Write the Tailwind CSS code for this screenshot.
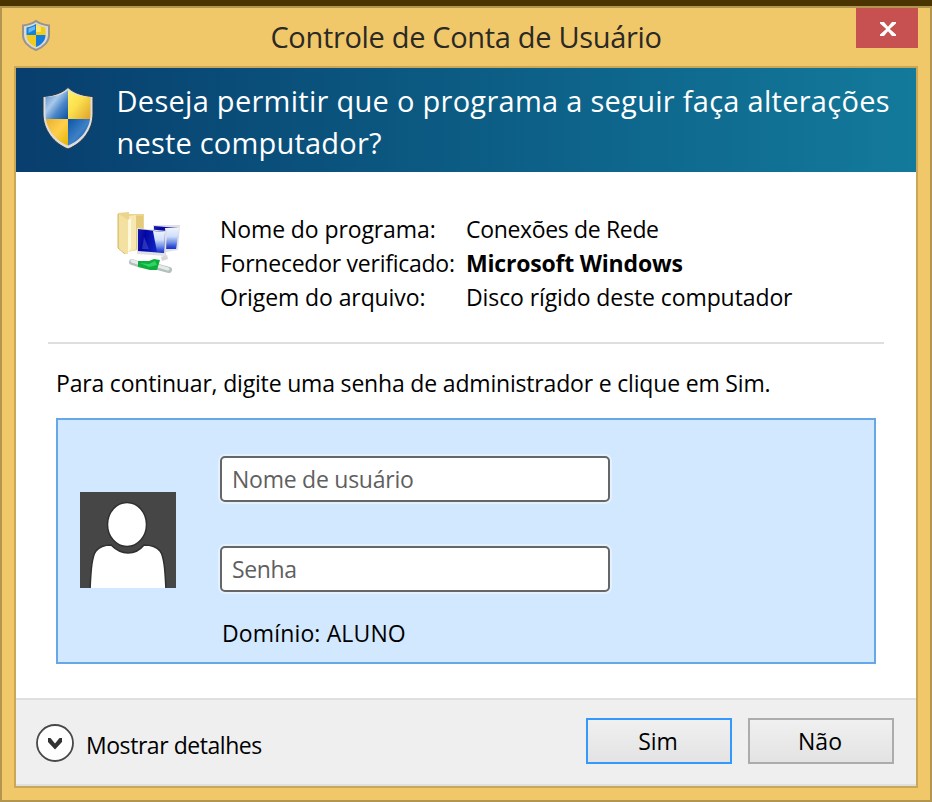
<!DOCTYPE html>
<html lang="pt-BR">
<head>
<meta charset="utf-8">
<title>Controle de Conta de Usuário</title>
<script src="https://cdn.jsdelivr.net/npm/@tailwindcss/browser@4"></script>
</head>
<body class="w-[932px] h-[802px] overflow-hidden bg-[#4a3500] pt-[6px] font-['Open_Sans','Noto_Sans',sans-serif] text-[23px] text-black whitespace-nowrap">
<svg width="0" height="0" class="absolute">
  <defs>
    <linearGradient id="b1" x1="0" y1="0" x2="1" y2="1"><stop offset="0" stop-color="#4380c8"/><stop offset=".4" stop-color="#a9c8ea"/><stop offset=".65" stop-color="#4a86c8"/><stop offset="1" stop-color="#0850a0"/></linearGradient>
    <linearGradient id="y1" x1="0" y1="0" x2="1" y2="1"><stop offset="0" stop-color="#fff36a"/><stop offset=".45" stop-color="#fbe04e"/><stop offset="1" stop-color="#e0a02a"/></linearGradient>
    <linearGradient id="y2" x1="0" y1="0" x2="1" y2="1"><stop offset="0" stop-color="#e8b02c"/><stop offset=".5" stop-color="#ffcf4c"/><stop offset="1" stop-color="#e3b400"/></linearGradient>
    <linearGradient id="b2" x1="0" y1="0" x2="1" y2="1"><stop offset="0" stop-color="#0b55a8"/><stop offset=".5" stop-color="#3d80c6"/><stop offset="1" stop-color="#0d4a94"/></linearGradient>
    <linearGradient id="s1" x1="0" x2="1" y2=".2"><stop offset="0" stop-color="#1a1ca8"/><stop offset=".3" stop-color="#0406a4"/><stop offset="1" stop-color="#1430cc"/></linearGradient>
    <linearGradient id="s2" x1="0" x2="0" y2="1"><stop offset="0" stop-color="#eef4fe"/><stop offset=".4" stop-color="#cfdffb"/><stop offset=".7" stop-color="#7898ea" stop-opacity=".9"/><stop offset="1" stop-color="#1c34d0" stop-opacity=".6"/></linearGradient>
    <clipPath id="sh"><path d="M26 4C20 9 12 11 3.500 11V28C3.500 42 13 54.500 26 59.500C39 54.500 48.500 42 48.500 28V11C40 11 32 9 26 4Z"/></clipPath>
  </defs>
</svg>
<main class="relative w-[932px] h-[796px] border-2 border-[#b2964f] bg-[#f0c869] flex flex-col px-[12px] pb-[12px]">
  <header class="h-[58px] shrink-0 flex relative">
    <svg class="absolute left-[7px] top-[11px]" width="30" height="33" viewBox="0 0 30 33">
      <path d="M15 2C11 5 7 6 2 6.500V16C2 23 8 28.500 15 31C22 28.500 28 23 28 16V6.500C23 6 19 5 15 2Z" fill="#dcdad6" stroke="#97948c" stroke-width="2"/>
      <path d="M15 5C12 7 9 8 5.500 8.500V16H15Z" fill="#1683d8"/><path d="M7.500 9.500L14 7V10.500L7.500 14Z" fill="#69b9f1"/>
      <path d="M15 5C18 7 21 8 24.500 8.500V16H15Z" fill="#f2cc16"/><path d="M15 5.500L20 8V13H15Z" fill="#fbe466"/>
      <path d="M5.500 16H15V28C10 26 5.500 22 5.500 16Z" fill="#f1cc1e"/>
      <path d="M24.500 16H15V28C20 26 24.500 22 24.500 16Z" fill="#147cdc"/>
    </svg>
    <h1 class="w-full text-center text-[29px] leading-[58px] text-[#2b2926] tracking-[-0.33px]">Controle de Conta de Usuário</h1>
    <button class="absolute right-0 top-0 w-[62px] h-[40px] bg-[#c75050] flex items-center justify-center">
      <svg width="18" height="16" viewBox="0 0 18 16" class="mt-[2px] ml-[2px]"><path d="M1 1H5L9 5.800L13 1H17V2.500L10.800 8L17 13.500V15H13L9 10.200L5 15H1V13.500L7.200 8L1 2.500Z" fill="#fff"/></svg>
    </button>
  </header>
  <div class="border-2 border-[#c9a757] grow flex flex-col bg-white">
    <section class="h-[104px] shrink-0 bg-linear-to-r from-[#083e6d] via-[#0c5c84] to-[#137a9b] flex">
      <svg class="ml-[26px] mt-[18px] shrink-0" width="52" height="65" viewBox="0 0 52 65">
        <path d="M26 1.500C20 7.500 10 10 1 10.500V28C1 44 12 57.500 26 63C40 57.500 51 44 51 28V10.500C42 10 32 7.500 26 1.500Z" fill="#dcdddd" stroke="#25374a" stroke-width="1"/>
        <g clip-path="url(#sh)"><path d="M3 3H26V33H3Z" fill="url(#b1)"/><path d="M26 3H49V33H26Z" fill="url(#y1)"/><path d="M3 33H26V60H3Z" fill="url(#y2)"/><path d="M26 33H49V60H26Z" fill="url(#b2)"/></g>
      </svg>
      <h2 class="ml-[22.500px] mt-[12px] text-[29px] leading-[42px] text-white"><span class="tracking-[0.28px]">Deseja permitir que o programa a seguir faça alterações</span><br><span class="tracking-[0.2px]">neste computador?</span></h2>
    </section>
    <section class="grow flex flex-col">
      <div class="h-[170px] mx-[32px] border-b-2 border-[#dedede] flex shrink-0 mt-[2px]">
        <svg class="ml-[68px] mt-[36px] shrink-0" width="66" height="66" viewBox="0 0 66 66">
          <path d="M2 3L13 2V4H28V39L11 42L2 38Z" fill="#ead48e"/><path d="M13 6L20 5V39L13 42Z" fill="#f6e8b0"/><path d="M20 6H27V38L20 39Z" fill="#e4cb7c"/><path d="M3 4L12 10V44L9 44L3 38Z" fill="#f3e1a2"/><path d="M12 10L15 8V38L12 43Z" fill="#fff9dc"/><path d="M2 4V38L9 44" fill="none" stroke="#d8b75c" stroke-width="1"/>
          <path d="M37 15H64L62 40L50 42L37 28Z" fill="#dfdfe4"/><path d="M38 16L62 18L60 39H50L48 21H38Z" fill="url(#s1)"/><path d="M49 18L63 18L60 39H51Z" fill="url(#s2)"/>
          <path d="M21 18L51 21L50 46L21 44Z" fill="#e0dfe2"/><path d="M22 19L49 22L48 43L22 41Z" fill="url(#s1)"/><path d="M37 21L49 22L48 43L41 42Z" fill="url(#s2)"/><path d="M28 27L33 39H26Z" fill="#3d4cc8" opacity=".6"/>
          <path d="M45 47L51 45L52 49L46 51Z" fill="#d6d6d6"/>
          <path d="M16 52L22 54M42 57L53 60" stroke="#b4c0be" stroke-width="6" stroke-linecap="round"/><path d="M16 51L22 53M42 56L52 59" stroke="#e6ebea" stroke-width="3" stroke-linecap="round"/>
          <path d="M22 51L33 51L38 49L44 50L41 60H34L22 57Z" fill="#0fae3c"/><path d="M24 53L33 54L39 51L41 55L33 57Z" fill="#2fd564"/>
        </svg>
        <dl class="mt-[38px] ml-[38px] grid grid-cols-[246px_auto] leading-[34px] h-fit">
          <dt class="tracking-[-0.1px]">Nome do programa:</dt><dd class="tracking-[-0.34px]">Conexões de Rede</dd>
          <dt class="tracking-[-0.25px]">Fornecedor verificado:</dt><dd class="font-bold tracking-[-0.2px]">Microsoft Windows</dd>
          <dt class="tracking-[-0.1px]">Origem do arquivo:</dt><dd class="tracking-[-0.1px]">Disco rígido deste computador</dd>
        </dl>
      </div>
      <p class="ml-[40px] mt-[21px] leading-[36px] tracking-[-0.18px]">Para continuar, digite uma senha de administrador e clique em Sim.</p>
      <div class="ml-[40px] mt-[17px] w-[820px] h-[246px] border-2 border-[#66a7e8] bg-[#d1e8ff] flex">
        <svg class="ml-[22px] mt-[72px] shrink-0" width="96" height="96" viewBox="0 0 96 96">
          <path d="M0 0H96V96H0Z" fill="#464646"/>
          <path d="M10 98C11 77 12 64 16 59C20 54 26 53 31 53C36 58 41 61 48 61C55 61 60 58 64 53C70 53 76 54 80 59C84 64 85 77 86 98Z" fill="#fff" stroke="#303030" stroke-width="1.500"/>
          <ellipse cx="47" cy="32.500" rx="19.500" ry="22" fill="#fff" stroke="#303030" stroke-width="1.500"/>
        </svg>
        <div class="ml-[44px] mt-[36px] flex flex-col text-[#5f5f5f]">
          <div class="w-[390px] h-[46px] border-2 border-[#666] rounded-[5px] bg-white ring-2 ring-white/40 pl-[10px] leading-[43px] tracking-[-0.25px]">Nome de usuário</div>
          <div class="mt-[44px] w-[390px] h-[46px] border-2 border-[#666] rounded-[5px] bg-white ring-2 ring-white/40 pl-[10px] leading-[43px] tracking-[-0.4px]">Senha</div>
          <p class="mt-[23px] ml-[2px] leading-[36px] text-black tracking-[0.14px]">Domínio: ALUNO</p>
        </div>
      </div>
    </section>
    <footer class="h-[88px] shrink-0 border-y-2 border-[#dfdfdf] bg-[#efefef] flex">
      <svg class="ml-[19px] mt-[23px] shrink-0" width="40" height="40" viewBox="0 0 40 40"><circle cx="20" cy="20" r="18" fill="#fff" stroke="#484848" stroke-width="1.800"/><path d="M13 15H15.500L20 20.500L24.500 15H27V19L20 26.500L13 19Z" fill="#333"/></svg>
      <p class="ml-[11px] mt-[27px] leading-[36px] w-[500px] tracking-[-0.45px]">Mostrar detalhes</p>
      <button class="mt-[18px] w-[146px] h-[46px] border-2 border-[#3399ff] bg-linear-to-b from-[#f0f0f0] to-[#e3e3e3] leading-[42px] pr-[2px]">Sim</button>
      <button class="ml-[16px] mt-[18px] w-[146px] h-[46px] border-2 border-[#acacac] bg-linear-to-b from-[#f0f0f0] to-[#e3e3e3] leading-[42px] pr-[2px]">Não</button>
    </footer>
  </div>
</main>
</body>
</html>
